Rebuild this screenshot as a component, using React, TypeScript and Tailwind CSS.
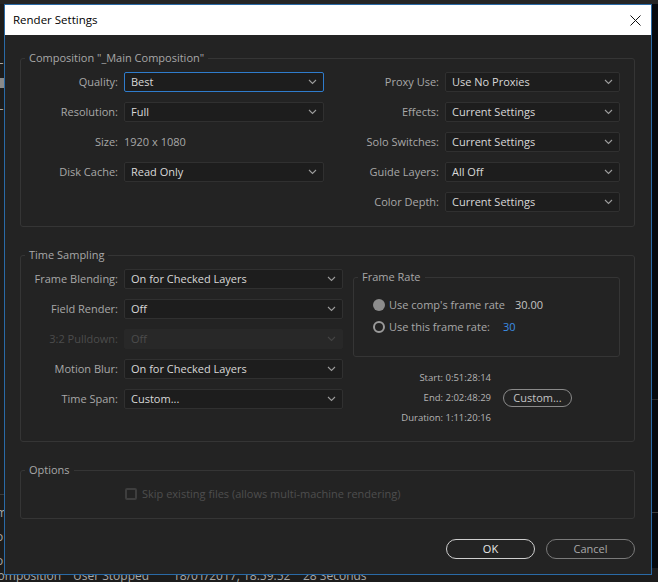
import React from "react";

const font = { fontFamily: '"Open Sans", "Noto Sans", sans-serif' };

const Chevron = ({ dim }: { dim?: boolean }) => (
  <svg width="9" height="6" viewBox="0 0 9 6" className="shrink-0">
    <polyline
      points="1,1 4.5,4.5 8,1"
      fill="none"
      stroke={dim ? "#444" : "#9c9c9c"}
      strokeWidth="1.1"
    />
  </svg>
);

const Select = ({
  value,
  width,
  focused,
  disabled,
}: {
  value: string;
  width: string;
  focused?: boolean;
  disabled?: boolean;
}) => (
  <div
    className={`${width} h-[20px] flex items-center justify-between pl-[6px] pr-[6px] rounded-[2px] border ${
      disabled
        ? "bg-[#282828] border-[#282828] text-[#4c4c4c]"
        : focused
        ? "bg-[#1d1d1d] border-[#2f7ccc] text-[#d8d8d8]"
        : "bg-[#1d1d1d] border-[#303030] text-[#d8d8d8]"
    }`}
  >
    <span className="leading-[18px]">{value}</span>
    <Chevron dim={disabled} />
  </div>
);

const Row = ({
  label,
  labelWidth,
  children,
  disabled,
}: {
  label: string;
  labelWidth: string;
  children: React.ReactNode;
  disabled?: boolean;
}) => (
  <div className="flex items-center gap-[6px] h-[20px]">
    <span
      className={`${labelWidth} text-right whitespace-nowrap ${
        disabled ? "text-[#4c4c4c]" : "text-[#a8a8a8]"
      }`}
    >
      {label}
    </span>
    {children}
  </div>
);

const Legend = ({ children }: { children: React.ReactNode }) => (
  <legend className="ml-[4px] px-[4px] leading-[16px] text-[#a8a8a8]">{children}</legend>
);

// the render queue panel that shows around the dialog's edges
const Background = () => (
  <div className="absolute inset-0 flex flex-col bg-[#1c1c1c] text-[12px] text-[#a8a8a8]">
    <div className="h-[4px] bg-[#262626] shrink-0" />
    <div className="flex flex-1 min-h-0 overflow-hidden">
      <div className="w-[4px] flex flex-col pt-[50px] gap-[12px] overflow-hidden">
        <span className="-ml-[3px] leading-[12px]">L</span>
        <span className="h-[10px] shrink-0 bg-[#8a8a8a]" />
        <span className="-ml-[3px] leading-[12px]">L</span>
        <div className="mt-[370px] border-t border-[#3a3a3a]" />
        <span className="-ml-[4px] leading-[12px]">m</span>
        <span className="-ml-[4px] leading-[12px]">o</span>
        <span className="-ml-[4px] leading-[12px]">o</span>
      </div>
      <div className="flex-1" />
      <div className="w-[6px] bg-[#06090d] flex flex-col">
        <div className="mt-[395px] border-t border-[#2a2a2a]" />
        <div className="mt-[112px] border-t border-[#3a3a3a]" />
      </div>
    </div>
    <div className="h-[16px] -mb-[2px] shrink-0 flex leading-[16px] whitespace-nowrap">
      <span className="w-[73px] -ml-[10px]">Composition</span>
      <span className="ml-[10px] w-[100px]">User Stopped</span>
      <span className="w-[130px]">18/01/2017, 18:59:52</span>
      <span>28 Seconds</span>
    </div>
  </div>
);

export default function App() {
  return (
    <div className="relative w-[658px] h-[582px] overflow-hidden text-[11px]" style={font}>
      <Background />
      <div className="absolute left-[4px] top-[4px] w-[648px] h-[571px] border border-[#2a6aa6] flex flex-col bg-[#232323]">
        <div className="h-[30px] bg-white flex items-center justify-between pl-[8px] pr-[10px] shrink-0">
          <span className="text-[11.5px] text-black">Render Settings</span>
          <svg width="11" height="11" viewBox="0 0 11 11">
            <path d="M0.5 0.5 L10.5 10.5 M10.5 0.5 L0.5 10.5" stroke="#111" strokeWidth="1" />
          </svg>
        </div>

        <div className="flex-1 pl-[15px] pr-[16px] flex flex-col">
          <fieldset className="mt-[15px] border border-[#353535] rounded-[3px]">
            <Legend>Composition "_Main Composition"</Legend>
            <div className="flex pt-[6px] pb-[14px] pr-[14px]">
              <div className="w-[303px] flex flex-col gap-[10px]">
                <Row label="Quality:" labelWidth="w-[97px]">
                  <Select value="Best" width="w-[200px]" focused />
                </Row>
                <Row label="Resolution:" labelWidth="w-[97px]">
                  <Select value="Full" width="w-[200px]" />
                </Row>
                <Row label="Size:" labelWidth="w-[97px]">
                  <span className="text-[#a8a8a8]">1920 x 1080</span>
                </Row>
                <Row label="Disk Cache:" labelWidth="w-[97px]">
                  <Select value="Read Only" width="w-[200px]" />
                </Row>
              </div>
              <div className="flex-1 flex flex-col gap-[10px]">
                <Row label="Proxy Use:" labelWidth="flex-1">
                  <Select value="Use No Proxies" width="w-[175px]" />
                </Row>
                <Row label="Effects:" labelWidth="flex-1">
                  <Select value="Current Settings" width="w-[175px]" />
                </Row>
                <Row label="Solo Switches:" labelWidth="flex-1">
                  <Select value="Current Settings" width="w-[175px]" />
                </Row>
                <Row label="Guide Layers:" labelWidth="flex-1">
                  <Select value="All Off" width="w-[175px]" />
                </Row>
                <Row label="Color Depth:" labelWidth="flex-1">
                  <Select value="Current Settings" width="w-[175px]" />
                </Row>
              </div>
            </div>
          </fieldset>

          <fieldset className="mt-[20px] border border-[#353535] rounded-[3px]">
            <Legend>Time Sampling</Legend>
            <div className="flex pt-[6px] pb-[13px] pr-[14px]">
              <div className="w-[322px] flex flex-col gap-[10px]">
                <Row label="Frame Blending:" labelWidth="w-[97px]">
                  <Select value="On for Checked Layers" width="w-[219px]" />
                </Row>
                <Row label="Field Render:" labelWidth="w-[97px]">
                  <Select value="Off" width="w-[219px]" />
                </Row>
                <Row label="3:2 Pulldown:" labelWidth="w-[97px]" disabled>
                  <Select value="Off" width="w-[219px]" disabled />
                </Row>
                <Row label="Motion Blur:" labelWidth="w-[97px]">
                  <Select value="On for Checked Layers" width="w-[219px]" />
                </Row>
                <Row label="Time Span:" labelWidth="w-[97px]">
                  <Select value="Custom..." width="w-[219px]" />
                </Row>
              </div>
              <div className="ml-[10px] flex-1 flex flex-col">
                <fieldset className="border border-[#353535] rounded-[3px]">
                  <Legend>Frame Rate</Legend>
                  <div className="pt-[12px] pb-[21px] pl-[19px] flex flex-col gap-[6px]">
                    <div className="flex items-center h-[16px]">
                      <span className="w-[12px] h-[12px] rounded-full bg-[#8c8c8c]" />
                      <span className="ml-[4px] w-[126px] text-[#a8a8a8]">Use comp's frame rate</span>
                      <span className="text-[#c4c4c4]">30.00</span>
                    </div>
                    <div className="flex items-center h-[16px]">
                      <span className="w-[12px] h-[12px] rounded-full border-2 border-[#9a9a9a]" />
                      <span className="ml-[4px] w-[114px] text-[#a8a8a8]">Use this frame rate:</span>
                      <span className="text-[#3b8ee6]">30</span>
                    </div>
                  </div>
                </fieldset>
                <div className="mt-[11px] flex items-center">
                  <div className="w-[138px] flex flex-col text-right text-[9.5px] text-[#b4b4b4] leading-[20px]">
                    <span>Start: 0:51:28:14</span>
                    <span>End: 2:02:48:29</span>
                    <span>Duration: 1:11:20:16</span>
                  </div>
                  <div className="ml-[12px] w-[69px] h-[18px] rounded-full border border-[#8a8a8a] flex items-center justify-center text-[#c4c4c4]">
                    Custom...
                  </div>
                </div>
              </div>
            </div>
          </fieldset>

          <fieldset className="mt-[20px] border border-[#353535] rounded-[3px]">
            <Legend>Options</Legend>
            <div className="pt-[8px] pb-[16px] pl-[104px] flex items-center h-[40px]">
              <span className="w-[12px] h-[12px] rounded-[2px] border-2 border-[#3e3e3e]" />
              <span className="ml-[5px] text-[#4e4e4e]">
                Skip existing files (allows multi-machine rendering)
              </span>
            </div>
          </fieldset>

          <div className="mt-[20px] flex justify-end gap-[11px]">
            <div className="w-[89px] h-[20px] rounded-full border border-[#cfcfcf] flex items-center justify-center text-[#e8e8e8]">
              OK
            </div>
            <div className="w-[89px] h-[20px] rounded-full border border-[#7a7a7a] flex items-center justify-center text-[#a8a8a8]">
              Cancel
            </div>
          </div>
        </div>
      </div>
    </div>
  );
}
